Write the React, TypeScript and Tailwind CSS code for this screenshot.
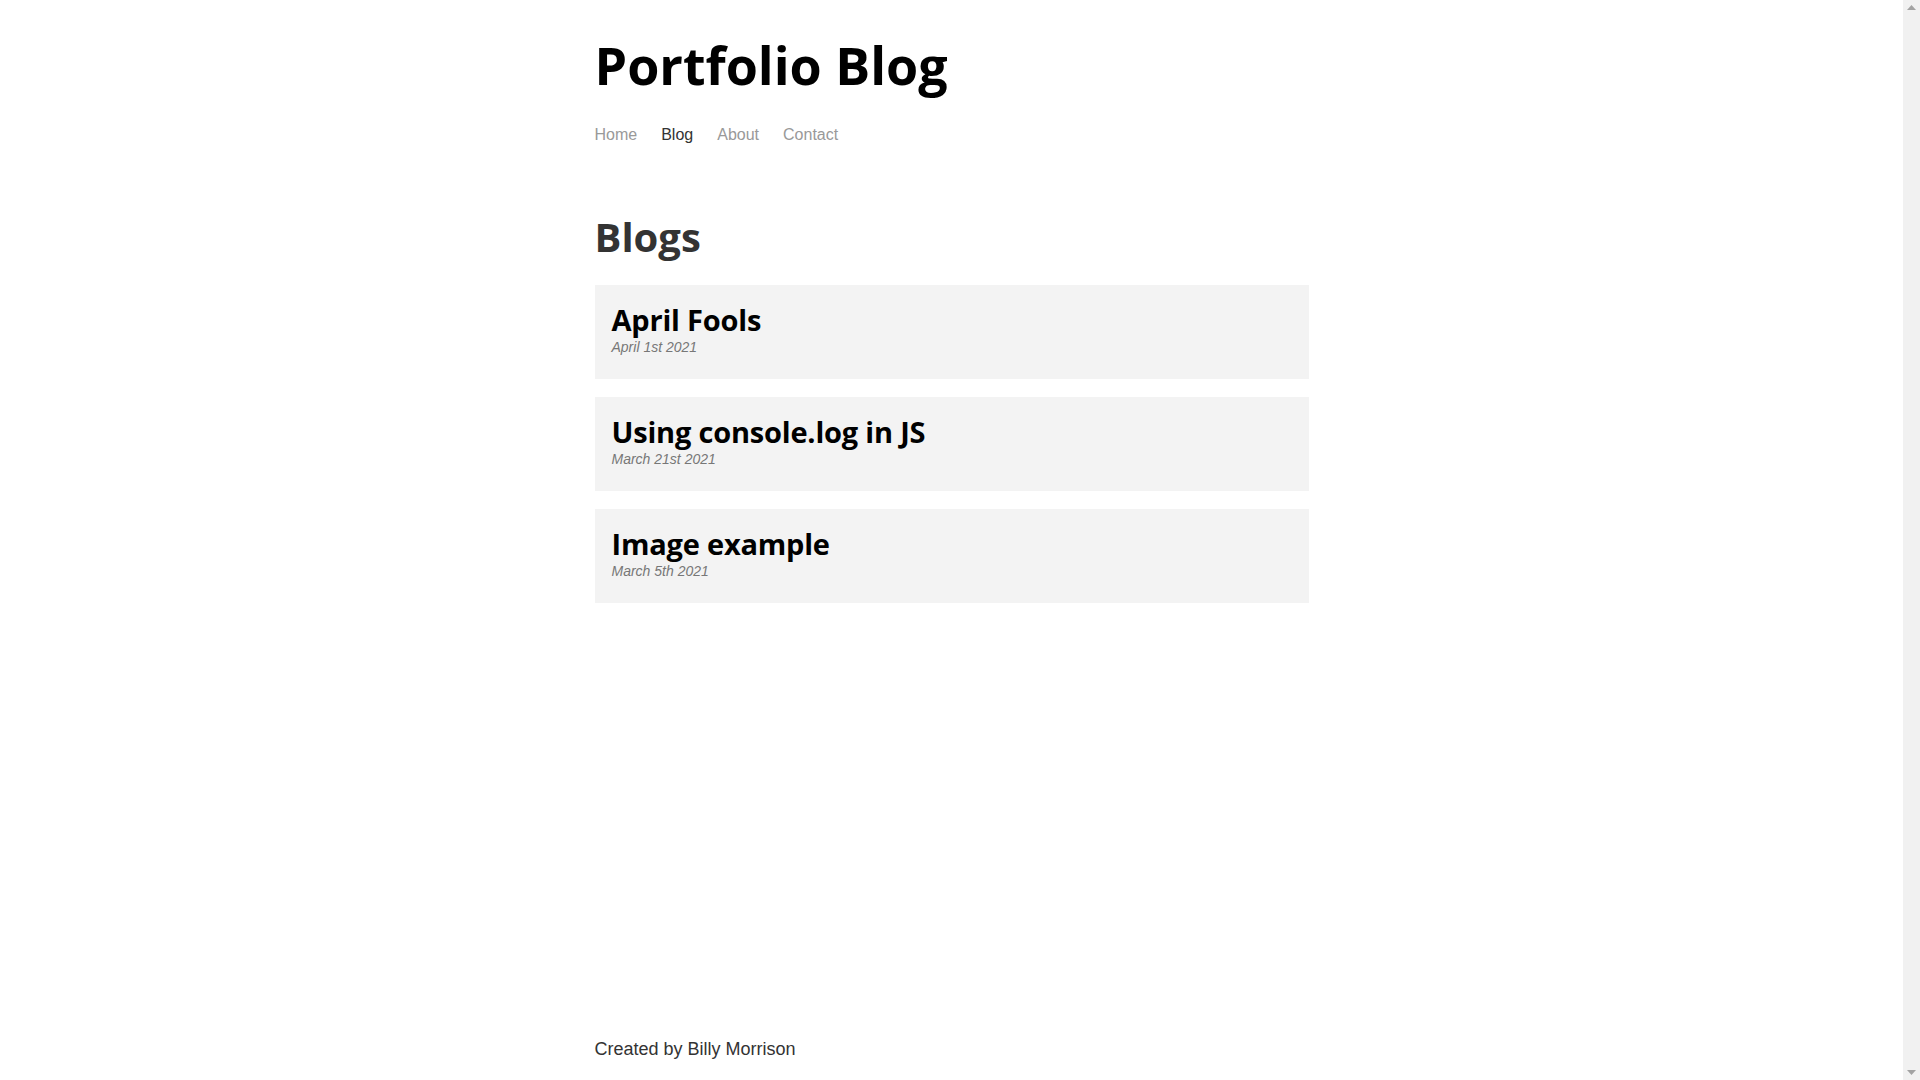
import React from "react";

const posts = [
  { title: "April Fools", date: "April 1st 2021" },
  { title: "Using console.log in JS", date: "March 21st 2021" },
  { title: "Image example", date: "March 5th 2021" },
];

const links = ["Home", "Blog", "About", "Contact"];

// stand-in for the browser's vertical scrollbar seen in the screenshot
function FakeScrollbar() {
  return (
    <div className="fixed right-0 top-0 flex h-screen w-[17px] flex-col items-center justify-between bg-[#f1f1f1] py-[5px]">
      <svg width="9" height="5" viewBox="0 0 9 5">
        <path d="M0 5 L4.5 0 L9 5 Z" fill="#a3a3a3" />
      </svg>
      <svg width="9" height="5" viewBox="0 0 9 5">
        <path d="M0 0 L4.5 5 L9 0 Z" fill="#a3a3a3" />
      </svg>
    </div>
  );
}

export default function App() {
  return (
    <div className="bg-white pr-[17px] font-['Liberation_Sans',Arial,sans-serif] text-[#333]">
      <div className="mx-auto flex min-h-[1100px] max-w-[714px] flex-col">
        <header className="pt-[39px]">
          <h1 className="font-['Open_Sans',sans-serif] text-[52px] font-bold leading-none text-black">
            Portfolio Blog
          </h1>
          <nav className="mt-[36px] flex gap-6 text-base leading-4">
            {links.map((l) => (
              <a key={l} href="#" className={l === "Blog" ? "text-[#333]" : "text-[#999]"}>
                {l}
              </a>
            ))}
          </nav>
        </header>

        <main>
          <h2 className="mt-[74px] font-['Open_Sans',sans-serif] text-[40px] font-bold leading-none text-[#333]">
            Blogs
          </h2>
          <div className="mt-[28px] flex flex-col gap-[18px]">
            {posts.map((p) => (
              <div key={p.title} className="bg-[#f3f3f3] px-[17px] pb-[25px] pt-[20px]">
                <h3 className="font-['Open_Sans',sans-serif] text-[29px] font-bold leading-none tracking-[-0.2px] text-black">
                  {p.title}
                </h3>
                <p className="mt-[6px] text-[14px] italic leading-[14px] text-[#777]">{p.date}</p>
              </div>
            ))}
          </div>
        </main>

        <footer className="mt-auto pb-[42px] text-[18px] leading-[18px] text-[#333]">Created by Billy Morrison</footer>
      </div>
      <FakeScrollbar />
    </div>
  );
}
